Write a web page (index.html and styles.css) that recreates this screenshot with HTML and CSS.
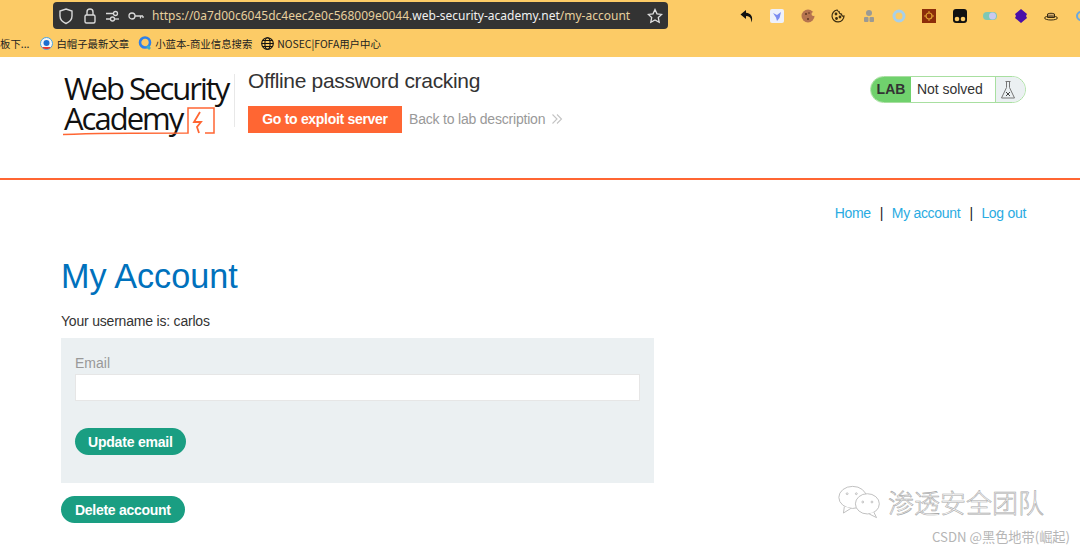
FILE: index.html
```html
<!DOCTYPE html>
<html lang="en">
<head>
    <meta charset="UTF-8">
    <meta name="viewport" content="width=device-width, initial-scale=1.0">
    <title>My Account - Offline password cracking</title>
    <link rel="stylesheet" href="styles.css">
</head>
<body>
    <!-- Browser chrome -->
    <div class="browser-top">
        <div class="toolbar">
            <div class="url-bar">
                <svg width="16" height="18" viewBox="0 0 16 18" fill="none" stroke="#d8d8d8" stroke-width="1.400"><path d="M8 2l6 2v5c0 3.500-2.500 6-6 7.500C4.500 15 2 12.500 2 9V4z"/></svg>
                <svg width="14" height="18" viewBox="0 0 14 18" fill="none" stroke="#d8d8d8" stroke-width="1.400"><rect x="2" y="8" width="10" height="8" rx="1.500"/><path d="M4 8V5a3 3 0 0 1 6 0v3"/></svg>
                <svg width="14" height="18" viewBox="0 0 14 18" fill="none" stroke="#d8d8d8" stroke-width="1.300"><path d="M1 6.500h7M1 12h4"/><circle cx="10.500" cy="6.500" r="2"/><circle cx="7.500" cy="12" r="2"/><path d="M10 12h4"/></svg>
                <svg width="16" height="18" viewBox="0 0 16 18" fill="none" stroke="#d8d8d8" stroke-width="1.300"><circle cx="4" cy="9" r="3"/><path d="M7 9h8M12.500 9v2.500M15 9v2"/></svg>
                <div class="url-text"><span class="url-dim">https://0a7d00c6045dc4eec2e0c568009e0044.</span><span class="url-host">web-security-academy.net</span><span class="url-dim">/my-account</span></div>
                <svg width="16" height="16" viewBox="0 0 16 16" fill="none" stroke="#e0e0e0" stroke-width="1.300"><path d="M8 1.500l2 4.300 4.700.6-3.400 3.200.9 4.700L8 12l-4.200 2.300.9-4.700L1.300 6.400 6 5.800z"/></svg>
            </div>
            <div class="extensions">
                <svg width="14" height="14" viewBox="0 0 14 14"><path d="M6 1L0.500 5.500 6 10V7c3 0 4.500 1.200 5 3.500l.5 3c2-5.500-.5-9.500-5.500-9.800z" fill="#111"/></svg>
                <svg width="14" height="14" viewBox="0 0 14 14"><rect width="14" height="14" rx="2" fill="#eef1fb"/><path d="M3 4l4 2 4-3-1.500 6L7 12 6 8.500z" fill="#7c8cf0"/></svg>
                <svg width="14" height="14" viewBox="0 0 14 14"><circle cx="7" cy="7" r="6.500" fill="#b5734f"/><circle cx="12.500" cy="5" r="2" fill="#fccb66"/><circle cx="5" cy="5" r="1" fill="#5e3420"/><circle cx="7" cy="10" r="1" fill="#5e3420"/><circle cx="8" cy="4" r=".8" fill="#5e3420"/></svg>
                <svg width="14" height="14" viewBox="0 0 14 14" fill="none" stroke="#3a2c10" stroke-width="1.200"><path d="M6 1a6 6 0 1 0 7 6c-1.500.5-2.500-.5-2.500-2C9 5 8 4 8 2.500 7 2.500 6.500 2 6 1z"/><circle cx="5" cy="5" r=".8" fill="#3a2c10"/><circle cx="9" cy="8" r=".8" fill="#3a2c10"/><circle cx="5.500" cy="9.500" r=".8" fill="#3a2c10"/></svg>
                <svg width="14" height="14" viewBox="0 0 14 14" fill="#9b9a94"><circle cx="7" cy="4" r="3"/><rect x="2" y="8" width="4.500" height="5" rx="1"/><rect x="7.500" y="8" width="4.500" height="5" rx="1"/></svg>
                <svg width="14" height="14" viewBox="0 0 14 14" fill="none" stroke="#a8d0e8" stroke-width="3"><circle cx="7" cy="7" r="5"/></svg>
                <svg width="14" height="14" viewBox="0 0 14 14"><rect width="14" height="14" fill="#8c2d0a"/><circle cx="7" cy="7" r="3" fill="none" stroke="#e0a030" stroke-width="1.200"/><path d="M7 2v2M7 10v2M2 7h2M10 7h2" stroke="#e0a030"/></svg>
                <svg width="14" height="14" viewBox="0 0 14 14"><rect width="14" height="14" rx="3" fill="#111"/><circle cx="4" cy="10" r="2.300" fill="#fccb66"/><circle cx="10" cy="10" r="2.300" fill="#fccb66"/></svg>
                <svg width="14" height="14" viewBox="0 0 14 14"><rect y="3" width="14" height="8" rx="4" fill="#7fc8b4"/><circle cx="9.500" cy="7" r="3.500" fill="#c9c9ee"/></svg>
                <svg width="14" height="14" viewBox="0 0 14 14"><path d="M7 0l6 5-1 2 1 2-6 5-6-5 1-2-1-2z" fill="#4a0fa8"/></svg>
                <svg width="14" height="14" viewBox="0 0 14 14" fill="none" stroke="#3a2c10"><path d="M3.500 8.500V5c2-1 5-1 7 0v3.500z" fill="#d8b070"/><ellipse cx="7" cy="9" rx="6.500" ry="2"/></svg>
                <svg width="14" height="14" viewBox="0 0 14 14" fill="none" stroke="#6aa8e0" stroke-width="2"><circle cx="7" cy="7" r="4"/></svg>
            </div>
        </div>
        <div class="bookmarks">
            <span class="bookmark bookmark-cut">板下...</span>
            <span class="bookmark">
                <svg width="13" height="13" viewBox="0 0 13 13"><circle cx="6.500" cy="6.500" r="6" fill="#f6f6f6" stroke="#4aa3e0"/><circle cx="6.500" cy="6" r="3" fill="#1f6fd0"/><path d="M2 10a5.500 5.500 0 0 0 9 0z" fill="#e83a30"/></svg>
                白帽子最新文章
            </span>
            <span class="bookmark">
                <svg width="14" height="14" viewBox="0 0 14 14" fill="none" stroke="#2f80e8" stroke-width="2.600"><circle cx="7" cy="6.500" r="5"/><path d="M9 10l3 3" stroke="#35b0c8"/></svg>
                小蓝本-商业信息搜索
            </span>
            <span class="bookmark">
                <svg width="13" height="13" viewBox="0 0 13 13" fill="none" stroke="#111" stroke-width="1.100"><circle cx="6.500" cy="6.500" r="5.800"/><ellipse cx="6.500" cy="6.500" rx="2.600" ry="5.800"/><path d="M.7 6.500h11.600M1.500 3.500h10M1.500 9.500h10"/></svg>
                NOSEC|FOFA用户中心
            </span>
        </div>
    </div>

    <!-- Lab header -->
    <header class="lab-header">
        <div class="logo">
            <div class="logo-line">Web Security</div>
            <div class="logo-line logo-second">Academy
                <svg class="logo-mark" width="153" height="30" viewBox="0 0 153 30" fill="none" stroke="#ff6633" stroke-width="1.500"><path d="M0 28.500C40 27 90 27 125 27V2H151V27H142"/><path d="M137 6l-6 10h7l-4 5 2 6" stroke-width="1.800"/></svg>
            </div>
        </div>
        <div class="logo-divider"></div>
        <div class="lab-title">
            <h2>Offline password cracking</h2>
            <div class="lab-links">
                <a class="btn-exploit">Go to exploit server</a>
                <a class="back-link">Back to lab description
                    <svg width="12" height="12" viewBox="0 0 12 12" fill="none" stroke="#c4c4c4" stroke-width="1.100"><path d="M1.500 1.500L6 6l-4.500 4.500M6 1.500L10.500 6 6 10.500"/></svg>
                </a>
            </div>
        </div>
        <div class="lab-status">
            <span class="lab-tag">LAB</span>
            <span class="lab-solved">Not solved</span>
            <span class="lab-flask">
                <svg width="16" height="20" viewBox="0 0 16 20" fill="none" stroke="#777" stroke-width="1"><path d="M5.500 1.500h5M6.500 1.500v6L1.500 18h13L9.500 7.500v-6"/><path d="M6 12l4 4M10 12l-4 4" stroke="#444"/></svg>
            </span>
        </div>
    </header>

    <!-- Page content -->
    <main class="content">
        <nav class="top-links">
            <a>Home</a><span class="sep">|</span><a>My account</a><span class="sep">|</span><a>Log out</a>
        </nav>
        <h1>My Account</h1>
        <p class="username">Your username is: carlos</p>
        <form class="email-form">
            <label>Email</label>
            <input type="email">
            <button type="button" class="btn btn-update">Update email</button>
        </form>
        <button type="button" class="btn">Delete account</button>
    </main>

    <!-- Repost watermark -->
    <div class="watermark">
        <div class="watermark-main">
            <svg width="46" height="34" viewBox="0 0 50 36" fill="#fff" stroke="#bbb" stroke-width="1"><ellipse cx="17" cy="13" rx="15" ry="12"/><path d="M8 23l-1 7 8-5"/><ellipse cx="33" cy="20" rx="13" ry="11"/><path d="M40 29l3 6-8-4"/><circle cx="11" cy="9" r="1"/><circle cx="21" cy="9" r="1"/><circle cx="28" cy="18" r="1"/><circle cx="38" cy="18" r="1"/></svg>
            <span class="watermark-name">渗透安全团队</span>
        </div>
        <div class="watermark-credit">CSDN @黑色地带(崛起)</div>
    </div>
</body>
</html>
```

FILE: styles.css
```css
body {
    font-family: 'Liberation Sans', Arial, sans-serif;
    margin: 0;
    background: white;
    color: #333;
    height: 551px;
    overflow: hidden;
    position: relative;
}

.browser-top {
    background: #fccb66;
    height: 57px;
}

.toolbar {
    display: flex;
    height: 31px;
    padding: 2px 0 0 53px;
    box-sizing: border-box;
}

.url-bar {
    display: flex;
    align-items: center;
    flex-shrink: 0;
    width: 615px;
    height: 27px;
    box-sizing: border-box;
    padding: 0 5px 0 5px;
    background: #333;
    border-radius: 4px;
    gap: 8.500px;
}

.url-text {
    font-family: 'Noto Sans', sans-serif;
    font-size: 12px;
    white-space: nowrap;
    flex: 1;
}

.url-dim {
    color: #e6cf9e;
}

.url-host {
    color: #f0f0f0;
}

.extensions {
    display: flex;
    flex-shrink: 0;
    gap: 16.400px;
    align-items: center;
    margin-left: 72px;
    height: 27px;
}

.extensions svg {
    flex-shrink: 0;
}

.bookmarks {
    display: flex;
    align-items: center;
    gap: 9px;
    height: 24px;
    font-family: 'Noto Sans CJK SC', sans-serif;
    font-size: 10.400px;
    color: #222;
}

.bookmark {
    display: flex;
    align-items: center;
    gap: 3px;
    white-space: nowrap;
}

.bookmark-cut {
    margin-right: 2px;
}

.lab-header {
    display: flex;
    height: 121px;
    border-bottom: 2px solid #ff6633;
    padding: 0 54px 0 64px;
}

.logo {
    width: 170px;
    padding-top: 16px;
    font-family: 'Open Sans', sans-serif;
    font-size: 31px;
    font-weight: 500;
    line-height: 30px;
    letter-spacing: -2px;
    color: #111;
    white-space: nowrap;
}

.logo-second {
    position: relative;
}

.logo-mark {
    position: absolute;
    left: -1px;
    top: 3px;
}

.logo-divider {
    width: 1px;
    height: 53px;
    margin-top: 17px;
    background: #e8e8e8;
}

.lab-title {
    margin-left: 13px;
    flex: 1;
}

.lab-title h2 {
    font-size: 21px;
    font-weight: normal;
    letter-spacing: -0.32px;
    line-height: 24px;
    margin: 12px 0 13px;
    color: #333;
}

.lab-links {
    display: flex;
    align-items: center;
}

.btn-exploit {
    background: #ff6633;
    color: white;
    font-size: 14px;
    letter-spacing: -0.3px;
    font-weight: bold;
    width: 154px;
    height: 27px;
    line-height: 27px;
    text-align: center;
}

.back-link {
    margin-left: 7px;
    margin-top: -1px;
    color: #999;
    font-size: 14px;
    letter-spacing: -0.2px;
    display: flex;
    align-items: center;
    gap: 6px;
}

.lab-status {
    display: flex;
    width: 156px;
    height: 27px;
    margin-top: 19px;
    box-sizing: border-box;
    border: 1px solid #a8dfa0;
    border-radius: 14px;
    overflow: hidden;
    font-size: 14px;
}

.lab-tag {
    background: #70d16d;
    width: 40px;
    text-align: center;
    font-weight: bold;
    line-height: 25px;
}

.lab-solved {
    flex: 1;
    padding-left: 6px;
    line-height: 25px;
    letter-spacing: -0.05px;
}

.lab-flask {
    width: 30px;
    background: #ebf0f2;
    border-left: 1px solid #a8dfa0;
    display: flex;
    align-items: center;
    padding-left: 4px;
    box-sizing: border-box;
}

.content {
    padding: 0 54px 0 61px;
}

.top-links {
    display: flex;
    justify-content: flex-end;
    font-size: 14px;
    letter-spacing: -0.3px;
    line-height: 16px;
    margin-top: 25px;
    color: #29abe2;
}

.sep {
    color: #222;
    margin: 0 9px;
    width: 3px;
    letter-spacing: 0;
}

h1 {
    font-size: 34.200px;
    font-weight: normal;
    color: #0071bc;
    line-height: 40px;
    margin: 35px 0 0;
}

.username {
    font-size: 14px;
    letter-spacing: -0.2px;
    line-height: 16px;
    margin: 17px 0 9px;
}

.email-form {
    display: block;
    width: 593px;
    height: 145px;
    box-sizing: border-box;
    padding: 17px 14px 0;
    background: #ebf0f2;
    margin-bottom: 13px;
}

.email-form label {
    display: block;
    font-size: 14px;
    line-height: 16px;
    color: #999;
    margin-bottom: 3px;
}

.email-form input {
    display: block;
    width: 565px;
    height: 27px;
    box-sizing: border-box;
    border: 1px solid #e6e6e6;
    background: white;
    margin-bottom: 27px;
}

.btn {
    display: block;
    font-family: 'Liberation Sans', Arial, sans-serif;
    background: #1a9e82;
    color: white;
    font-size: 14px;
    letter-spacing: -0.28px;
    font-weight: bold;
    height: 27px;
    padding: 0 14px;
    border: none;
    border-radius: 14px;
}

.btn-update {
    padding: 0 13px;
    letter-spacing: -0.2px;
}

.watermark {
    position: absolute;
    right: 10px;
    top: 483px;
    text-align: right;
}

.watermark-main {
    display: flex;
    align-items: center;
    gap: 5px;
    margin-right: 26px;
}

.watermark-name {
    font-family: 'Noto Sans CJK SC', sans-serif;
    font-size: 26px;
    font-weight: 300;
    color: #fff;
    -webkit-text-stroke: 0.6px #a8a8a8;
}

.watermark-credit {
    font-family: 'Noto Sans CJK SC', 'Liberation Sans', sans-serif;
    font-size: 13.200px;
    color: #b5b5b5;
    margin-top: 7px;
}
```
